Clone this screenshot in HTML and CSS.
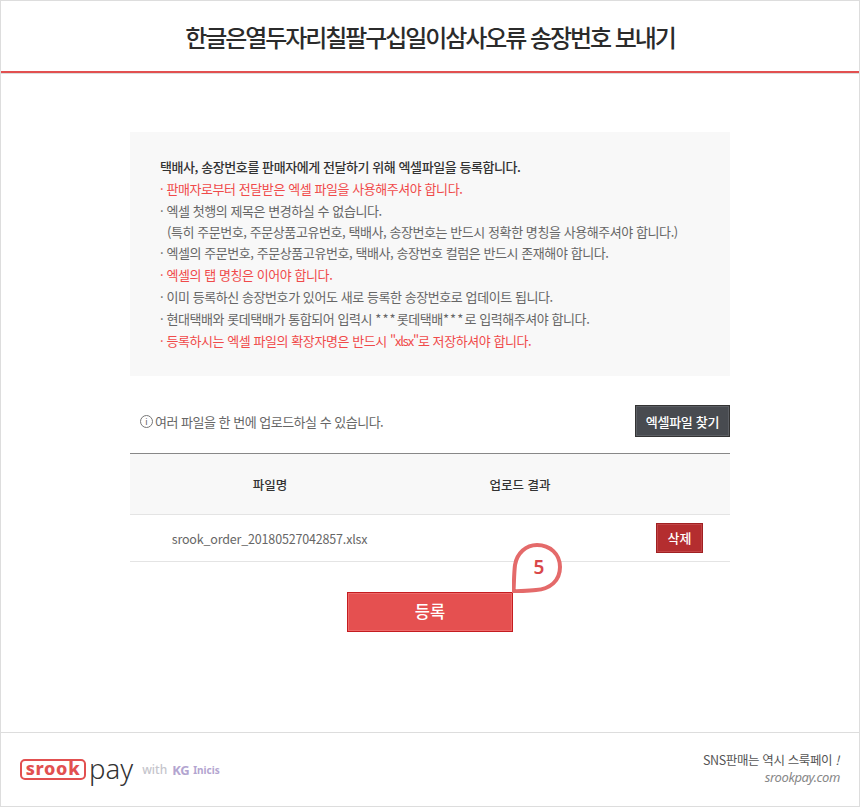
FILE: index.html
```html
<!DOCTYPE html>
<html lang="ko">
<head>
<meta charset="utf-8">
<title>송장번호 보내기</title>
<link rel="stylesheet" href="styles.css">
</head>
<body>
<div class="frame">
  <header class="top"><h1>한글은열두자리칠팔구십일이삼사오류 송장번호 보내기</h1></header>
  <main class="main">
    <section class="notice">
      <p class="strong">택배사, 송장번호를 판매자에게 전달하기 위해 엑셀파일을 등록합니다.</p>
      <p class="red">· 판매자로부터 전달받은 엑셀 파일을 사용해주셔야 합니다.</p>
      <p>· 엑셀 첫행의 제목은 변경하실 수 없습니다.</p>
      <p class="sub">(특히 주문번호, 주문상품고유번호, 택배사, 송장번호는 반드시 정확한 명칭을 사용해주셔야 합니다.)</p>
      <p>· 엑셀의 주문번호, 주문상품고유번호, 택배사, 송장번호 컬럼은 반드시 존재해야 합니다.</p>
      <p class="red">· 엑셀의 탭 명칭은 이어야 합니다.</p>
      <p>· 이미 등록하신 송장번호가 있어도 새로 등록한 송장번호로 업데이트 됩니다.</p>
      <p>· 현대택배와 롯데택배가 통합되어 입력시 <span class="ast">***</span>롯데택배<span class="ast">***</span>로 입력해주셔야 합니다.</p>
      <p class="red">· 등록하시는 엑셀 파일의 확장자명은 반드시 <span class="tight">"xlsx"</span>로 저장하셔야 합니다.</p>
    </section>
    <div class="tools">
      <span class="hint"><span class="info">i</span>여러 파일을 한 번에 업로드하실 수 있습니다.</span>
      <button class="btn-dark" type="button">엑셀파일 찾기</button>
    </div>
    <div class="table">
      <div class="row head">
        <span class="c-name">파일명</span><span class="c-result">업로드 결과</span><span class="c-act"></span>
      </div>
      <div class="row body">
        <span class="c-name">srook_order_20180527042857.xlsx</span><span class="c-result"></span>
        <span class="c-act"><button class="btn-del" type="button">삭제</button></span>
      </div>
    </div>
    <div class="submit">
      <div class="submit-wrap">
        <button class="btn-main" type="button">등록</button>
        <div class="pin">
          <svg viewBox="0 0 50 50" width="50" height="50"><path d="M1.5 48.5 C2 40 2 30 3 22 C5 10 14 2 25 2 C38 2 48 11 48 24 C48 38 38 46 24 47 C16 48 8 48 1.5 48.5 Z" fill="#fff" stroke="#e46a6a" stroke-width="4"/></svg>
          <span>5</span>
        </div>
      </div>
    </div>
  </main>
  <footer class="foot">
    <div class="brand">
      <span class="logo">srook</span><span class="pay">pay</span><span class="with">with</span><span class="kg">KG</span><span class="inicis">Inicis</span>
    </div>
    <div class="slogan">
      <div class="s1">SNS판매는 역시 스룩페이 <i>!</i></div>
      <div class="s2">srookpay.com</div>
    </div>
  </footer>
</div>
</body>
</html>
```
FILE: styles.css
```css
* { box-sizing: border-box; }
html, body { margin: 0; padding: 0; background: #fff; }
body { font-family: "Noto Sans CJK KR", "Noto Sans", sans-serif; color: #555; }
.frame { width: 860px; height: 807px; border: 1px solid #ddd; display: flex; flex-direction: column; }
.top { height: 72px; border-bottom: 2px solid #e25050; box-shadow: 0 1px 0 #ddd; display: flex; align-items: center; justify-content: center; padding-top: 2px; }
h1 { margin: 0; font-size: 24px; font-weight: 500; color: #2b2b2b; letter-spacing: -2.08px; line-height: 30px; }
.main { flex: 1; padding: 59px 129px 0; }
.notice { height: 244px; background: #f8f8f8; padding: 24px 30px 0; font-size: 13px; letter-spacing: -0.43px; }
.notice p { margin: 0; line-height: 22px; color: #666; white-space: nowrap; }
.notice p.strong { color: #333; font-weight: 500; }
.notice p.red { color: #f04a4a; }
.notice p.sub { padding-left: 7px; line-height: 20px; }
.ast { letter-spacing: 1.1px; }
.tight { letter-spacing: -1.2px; }
.tools { height: 77px; display: flex; align-items: center; justify-content: space-between; padding: 13px 0 0 10px; }
.hint { display: flex; align-items: center; font-size: 13px; letter-spacing: -0.5px; color: #666; }
.info { width: 13px; height: 13px; margin-right: 2px; border: 1px solid #777; border-radius: 50%; font: 400 9px/11px "Noto Sans", sans-serif; text-align: center; letter-spacing: 0; }
.btn-dark { width: 95px; height: 32px; padding: 0; background: #484b50; border: 1px solid #333; box-shadow: inset 0 0 0 1px #5c5f64; color: #fff; font: 500 13px "Noto Sans CJK KR", sans-serif; letter-spacing: -0.3px; }
.table { border-top: 1px solid #888; }
.row { display: flex; align-items: center; }
.head { height: 61px; background: #f8f8f8; border-bottom: 1px solid #e4e4e4; font-size: 12.5px; font-weight: 500; color: #333; }
.body { height: 47px; border-bottom: 1px solid #e4e4e4; font-size: 12.5px; letter-spacing: -0.17px; color: #666; }
.c-name { width: 279px; text-align: center; }
.head .c-name { width: 280px; }
.c-result { width: 220px; text-align: center; }
.c-act { width: 100px; text-align: center; }
.btn-del { display: block; margin: -1px auto 0 27px; width: 47px; height: 30px; padding: 0; background: #b42d2f; border: 1px solid #a02022; box-shadow: inset 0 0 0 1px #c24446; color: #fff; font: 500 13px "Noto Sans CJK KR", sans-serif; }
.submit { display: flex; justify-content: center; padding-top: 30px; }
.submit-wrap { position: relative; }
.btn-main { display: block; width: 166px; height: 40px; padding: 0 0 2px; background: #e55050; border: 1px solid #c41c20; box-shadow: inset 0 0 0 1px #ee6a6a; color: #fff; font: 500 16.5px "Noto Sans CJK KR", sans-serif; }
.pin { position: absolute; left: 165px; top: -49px; width: 50px; height: 50px; }
.pin svg { display: block; }
.pin span { position: absolute; left: 18px; top: 12px; width: 18px; text-align: center; font: 600 19px/24px "Noto Sans", sans-serif; color: #d9474a; }
.foot { height: 74px; border-top: 1px solid #ddd; display: flex; align-items: center; justify-content: space-between; padding: 0 19px; }
.brand { display: flex; align-items: center; }
.logo { display: inline-block; height: 21px; width: 66px; border: 2px solid #e25050; border-radius: 5px; color: #e25050; font: 800 18px/15px "Noto Sans", sans-serif; text-align: center; letter-spacing: 0.7px; }
.pay { font: 300 27.5px/30px "Noto Sans", sans-serif; color: #333; margin-left: 3px; position: relative; top: -1px; }
.with { font: 500 12px "Noto Sans", sans-serif; color: #c5c5cc; margin-left: 9px; }
.kg { font: 700 13px "Noto Sans", sans-serif; color: #b3a5d0; margin-left: 5px; letter-spacing: -0.4px; }
.inicis { font: 700 10px "Noto Sans", sans-serif; color: #b3a5d0; margin-left: 4px; }
.slogan { text-align: right; margin-top: -3px; }
.s1 { font-size: 12.5px; letter-spacing: -0.37px; color: #555; line-height: 18px; position: relative; left: -1px; }
.s1 i { font-style: italic; }
.s2 { font-size: 13px; font-style: italic; letter-spacing: -0.4px; color: #888; line-height: 16px; font-family: "Noto Sans", sans-serif; }
```
